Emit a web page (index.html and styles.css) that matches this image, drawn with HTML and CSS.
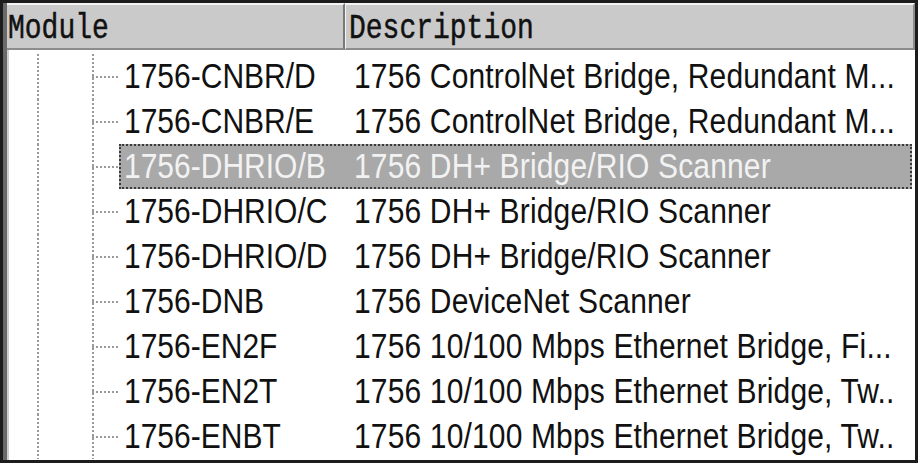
FILE: index.html
```html
<!DOCTYPE html>
<html>
<head>
<meta charset="utf-8">
<link rel="stylesheet" href="styles.css">
</head>
<body>
<div class="frame">
  <div class="list">
    <div class="header">
      <div class="hcell hmod"><span class="htext">Module</span></div>
      <div class="hcell hdesc"><span class="htext">Description</span></div>
    </div>
    <div class="rows">
      <div class="row"><div class="indent"></div><div class="cells"><span class="mod">1756-CNBR/D</span><span class="desc">1756 ControlNet Bridge, Redundant M...</span></div></div>
      <div class="row"><div class="indent"></div><div class="cells"><span class="mod">1756-CNBR/E</span><span class="desc">1756 ControlNet Bridge, Redundant M...</span></div></div>
      <div class="row"><div class="indent"></div><div class="cells selected"><span class="mod">1756-DHRIO/B</span><span class="desc">1756 DH+ Bridge/RIO Scanner</span></div></div>
      <div class="row"><div class="indent"></div><div class="cells"><span class="mod">1756-DHRIO/C</span><span class="desc">1756 DH+ Bridge/RIO Scanner</span></div></div>
      <div class="row"><div class="indent"></div><div class="cells"><span class="mod">1756-DHRIO/D</span><span class="desc">1756 DH+ Bridge/RIO Scanner</span></div></div>
      <div class="row"><div class="indent"></div><div class="cells"><span class="mod">1756-DNB</span><span class="desc">1756 DeviceNet Scanner</span></div></div>
      <div class="row"><div class="indent"></div><div class="cells"><span class="mod">1756-EN2F</span><span class="desc">1756 10/100 Mbps Ethernet Bridge, Fi...</span></div></div>
      <div class="row"><div class="indent"></div><div class="cells"><span class="mod">1756-EN2T</span><span class="desc">1756 10/100 Mbps Ethernet Bridge, Tw..</span></div></div>
      <div class="row"><div class="indent"></div><div class="cells"><span class="mod">1756-ENBT</span><span class="desc">1756 10/100 Mbps Ethernet Bridge, Tw..</span></div></div>
    </div>
  </div>
</div>
</body>
</html>
```

FILE: styles.css
```css
* { box-sizing: border-box; }
html, body { margin: 0; padding: 0; background: #ffffff; }
.frame {
  width: 918px;
  height: 463px;
  border: 3px solid #1c1c1c;
  background: #ffffff;
  overflow: hidden;
}
.list {
  height: 100%;
  border-left: 4px solid #6a6a6a;
  box-shadow: inset 2px 0 0 #cfcfcf;
  display: flex;
  flex-direction: column;
}
.header {
  display: flex;
  height: 47px;
  flex: none;
}
.hcell {
  background: #cacaca;
  border-top: 2px solid #f4f4f4;
  border-bottom: 2px solid #8c8c8c;
  font-family: "Liberation Mono", monospace;
  font-size: 28px;
  color: #111;
  display: flex;
  align-items: center;
  padding-top: 4px;
}
.htext {
  display: inline-block;
  transform: scaleY(1.22);
  -webkit-text-stroke: 0.4px #111;
}
.hmod {
  width: 338px;
  padding-left: 1px;
  border-right: 2px solid #777;
}
.hdesc {
  flex: 1;
  padding-left: 3px;
  border-left: 1px solid #f4f4f4;
  border-right: 2px solid #8c8c8c;
}
.rows {
  padding-top: 4px;
  display: flex;
  flex-direction: column;
}
.row {
  display: flex;
  height: 45px;
}
.indent {
  width: 112px;
  flex: none;
  background-image:
    repeating-linear-gradient(to bottom, #9a9a9a 0 2px, transparent 2px 4px),
    repeating-linear-gradient(to bottom, #9a9a9a 0 2px, transparent 2px 4px),
    repeating-linear-gradient(to right, #9a9a9a 0 2px, transparent 2px 4px);
  background-size: 2px 100%, 2px 100%, 26px 2px;
  background-position: 30px 0, 85px 0, 85px 22px;
  background-repeat: no-repeat;
}
.cells {
  display: flex;
  align-items: center;
  width: 793px;
  font-family: "Liberation Sans", Arial, sans-serif;
  font-size: 30px;
  color: #111;
  white-space: nowrap;
}
.mod, .desc {
  display: inline-block;
  transform: scaleY(1.14);
}
.mod {
  width: 226px;
  padding-left: 5px;
  flex: none;
}
.desc {
  padding-left: 9px;
  letter-spacing: 0.15px;
}
.selected {
  background: #a9a9a9;
  color: #f2f2f2;
  outline: 2px dotted #3a3a3a;
  outline-offset: -2px;
}
```
